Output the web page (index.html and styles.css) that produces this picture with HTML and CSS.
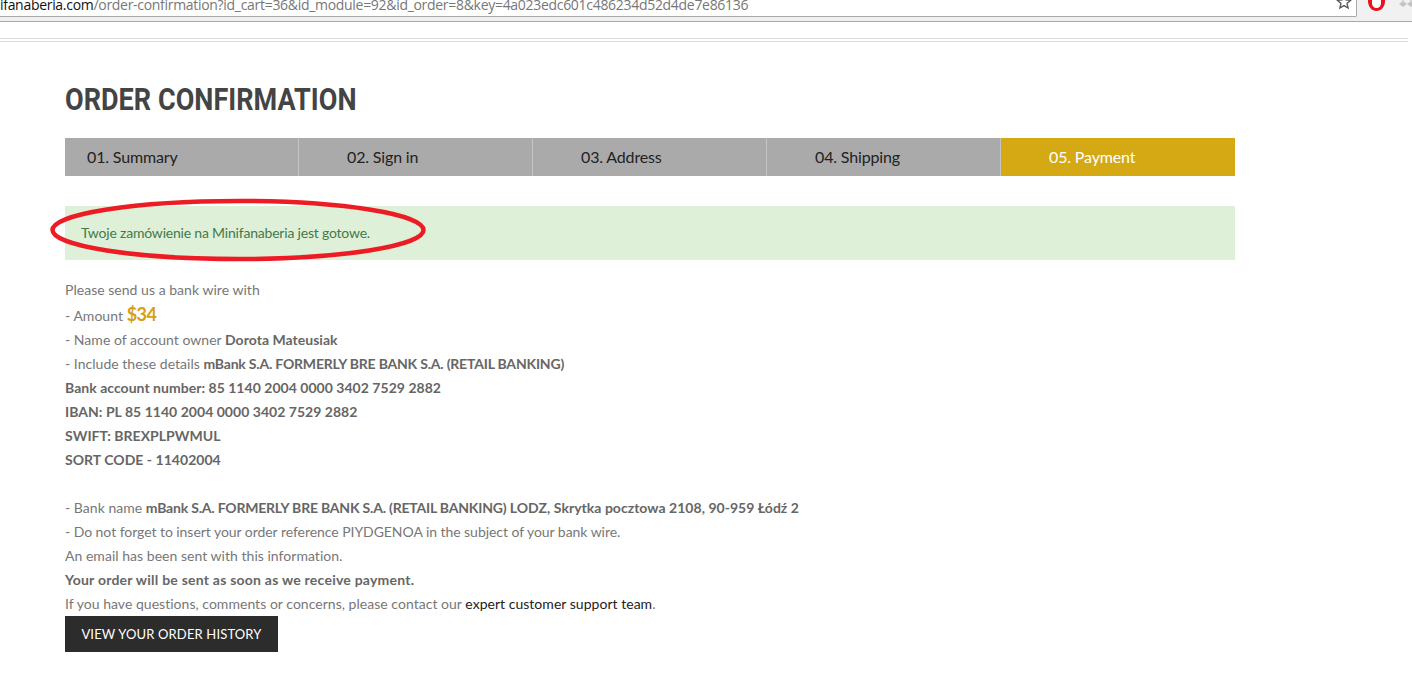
FILE: index.html
```html
<!DOCTYPE html>
<html lang="en">
<head>
<meta charset="utf-8">
<title>Order confirmation</title>
<link rel="stylesheet" href="styles.css">
</head>
<body>
<header class="chrome">
  <div class="urlbar">
    <div class="url"><span class="host">ifanaberia.com</span>/order-confirmation?id_cart=36&amp;id_module=92&amp;id_order=8&amp;key=4a023edc601c486234d52d4de7e86136</div>
    <svg class="star" viewBox="0 0 16 16" width="16" height="16"><path d="M8 1.6l1.9 4.4 4.6.4-3.500 3 1.100 4.600L8 11.600 3.900 14l1.100-4.600-3.500-3 4.600-.4z" fill="none" stroke="#555" stroke-width="1.300"/></svg>
  </div>
  <div class="exts">
    <svg viewBox="0 0 19 16" width="19" height="16"><path d="M1 0h17v6c0 6-4 10-8.500 10S1 12 1 6z" fill="#e8141c"/><path d="M5 0v8c0 3 2 5 4.500 5s4.500-2 4.500-5V0z" fill="#fff"/></svg>
    <svg viewBox="0 0 16 14" width="16" height="14"><path d="M4 0l4 3-4 3-4-3zM12 0l4 3-4 3-4-3zM4 6l4 3-4 3-4-3zM12 6l4 3-4 3-4-3z" fill="#c4c4c4"/></svg>
  </div>
</header>
<div class="rule"></div>
<main class="page">
  <h1 class="title">ORDER CONFIRMATION</h1>
  <ol class="steps">
    <li class="step first">01. Summary</li>
    <li class="step">02. Sign in</li>
    <li class="step">03. Address</li>
    <li class="step">04. Shipping</li>
    <li class="step active">05. Payment</li>
  </ol>
  <div class="alert">Twoje zamówienie na Minifanaberia jest gotowe.
    <svg class="circle" viewBox="0 0 380 66" width="380" height="66"><ellipse cx="188" cy="33" rx="185.500" ry="29" fill="none" stroke="#ed1c24" stroke-width="4.500"/></svg>
  </div>
  <div class="box">
    Please send us a bank wire with<br>
    - Amount <span class="price">$34</span><br>
    - Name of account owner <strong>Dorota Mateusiak</strong><br>
    - Include these details <strong><span class="caps">mBank S.A. FORMERLY BRE BANK S.A. (RETAIL BANKING)</span><br>
    Bank account number: 85 1140 2004 0000 3402 7529 2882<br>
    IBAN: PL 85 1140 2004 0000 3402 7529 2882<br>
    SWIFT: BREXPLPWMUL<br>
    SORT CODE - 11402004</strong><br>
    <br>
    - Bank name <strong><span class="caps">mBank S.A. FORMERLY BRE BANK S.A. (RETAIL BANKING)</span> LODZ, Skrytka pocztowa 2108, 90-959 Łódź 2</strong><br>
    <span class="tight">- Do not forget to insert your order reference PIYDGENOA in the subject of your bank wire.</span><br>
    An email has been sent with this information.<br>
    <strong class="wide">Your order will be sent as soon as we receive payment.</strong><br>
    If you have questions, comments or concerns, please contact our <a class="link" href="#">expert customer support team</a>.
  </div>
  <a class="button" href="#">VIEW YOUR ORDER HISTORY</a>
</main>
</body>
</html>
```
FILE: styles.css
```css
html, body {
  margin: 0;
  padding: 0;
  background: #fff;
  overflow: hidden;
}
body {
  height: 682px;
  font-family: "Lato", "Liberation Sans", sans-serif;
  color: #777;
}
.chrome {
  display: flex;
  height: 21px;
  background: #f1f1f1;
  border-bottom: 1px solid #a8a8a8;
}
.urlbar {
  flex: 0 0 1356px;
  height: 16px;
  background: #fff;
  border: 1px solid #a9a9a9;
  border-width: 0 1px 1px 0;
  border-bottom-right-radius: 2px;
  display: flex;
  justify-content: space-between;
  overflow: hidden;
}
.url {
  font-family: "Open Sans", sans-serif;
  font-size: 14px;
  line-height: 14px;
  margin-top: -2px;
  white-space: nowrap;
  color: #777;
  letter-spacing: -0.3px;
}
.host { color: #111; }
.star { margin: -6px 4px 0 0; }
.exts {
  display: flex;
  gap: 13px;
  padding-left: 10px;
  margin-top: -5px;
}
.rule {
  height: 2px;
  width: 1408px;
  margin-top: 16px;
  border-top: 1px solid #ddd;
  border-bottom: 1px solid #ddd;
}
.page {
  width: 1170px;
  margin-left: 65px;
  font-size: 14px;
  line-height: 24px;
  letter-spacing: 0.03px;
}
.title {
  width: fit-content;
  margin: 37px 0 0;
  font-family: "Roboto", sans-serif;
  font-size: 32px;
  line-height: 40px;
  font-weight: 700;
  color: #444;
  white-space: nowrap;
  transform: scaleX(0.845);
  transform-origin: left center;
}
.steps {
  display: flex;
  list-style: none;
  margin: 19px 0 0;
  padding: 0;
  height: 38px;
}
.step {
  flex: 0 0 234px;
  box-sizing: border-box;
  background: #aaa;
  color: #222;
  font-size: 16px;
  line-height: 38px;
  letter-spacing: -0.15px;
  padding-left: 48px;
  border-right: 1px solid #c4c4c4;
}
.step.first { padding-left: 22px; }
.step.active { background: #d5a913; color: #fff; border-right: 0; }
.alert {
  position: relative;
  margin-top: 30px;
  height: 54px;
  box-sizing: border-box;
  padding: 15px 16px;
  background: #dff0d8;
  color: #44794a;
  letter-spacing: -0.2px;
}
.circle {
  position: absolute;
  left: -15px;
  top: -9px;
}
.box {
  margin-top: 18px;
  white-space: nowrap;
}
.box strong { color: #666; font-weight: 700; }
.box .caps { letter-spacing: -0.2px; }
.box .wide { letter-spacing: 0.23px; }
.box .tight { letter-spacing: -0.05px; }
.price {
  color: #d5a013;
  font-size: 18px;
  font-weight: 700;
  letter-spacing: -0.5px;
}
.link { color: #222; text-decoration: none; }
.button {
  display: block;
  width: 213px;
  height: 36px;
  background: #2c2c2c;
  color: #fff;
  font-size: 13px;
  line-height: 36px;
  letter-spacing: 0.15px;
  text-align: center;
  text-decoration: none;
}
```
